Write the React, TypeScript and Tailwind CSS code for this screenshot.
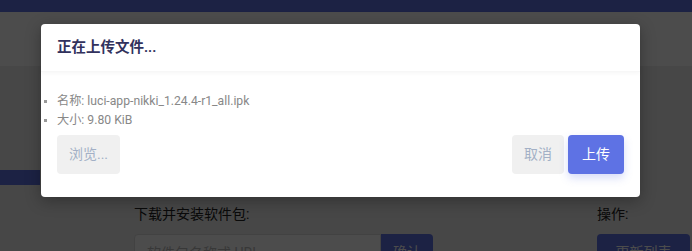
import React from "react";

export default function App() {
  const font = { fontFamily: '"Roboto", "Noto Sans CJK SC", sans-serif' };
  return (
    <div className="relative w-[692px] h-[251px] overflow-hidden bg-[#ededed]" style={font}>
      {/* page behind */}
      <div className="h-[12px] bg-[#5e72e4]" />
      <div className="h-[54px] bg-white" />
      <div className="flex">
        <div className="w-[40px] pt-[104px]">
          <div className="h-[15px] bg-[#5e72e4]" />
        </div>
        <div className="flex-1 pl-[94px] pt-[138px] flex">
          <div className="w-[299px]">
            <div className="text-[14px] text-[#222] leading-[20px]">下载并安装软件包:</div>
            <div className="mt-[10px] flex h-[36px]">
              <div className="flex-1 bg-white border border-[#ddd] rounded-l-[4px] px-[12px] pt-[8px] text-[14px] text-[#bbb]">软件包名称或 URL…</div>
              <div className="w-[52px] bg-[#5e72e4] rounded-r-[4px] text-white text-[14px] text-center pt-[8px]">确认</div>
            </div>
          </div>
          <div className="ml-[164px]">
            <div className="text-[14px] text-[#222] leading-[20px]">操作:</div>
            <div className="mt-[10px] w-[93px] h-[36px] bg-[#5e72e4] rounded-[4px] text-white text-[14px] text-center pt-[8px]">更新列表</div>
          </div>
        </div>
      </div>

      {/* overlay */}
      <div className="absolute inset-0 bg-black/70" />

      {/* modal */}
      <div className="absolute left-[41px] top-[24px] w-[599px] h-[173px] bg-white rounded-[4px] shadow-[0_4px_16px_rgba(0,0,0,0.3)] flex flex-col">
        <div className="h-[48px] flex items-center px-[16px] shadow-[0_2px_4px_rgba(0,0,0,0.03)] border-b border-[#f7f7f7]">
          <h3 className="text-[14.5px] font-semibold text-[#32325d]">正在上传文件...</h3>
        </div>
        <ul className="list-[square] pl-[16px] mt-[20px] text-[12.2px] leading-[19px] text-[#888] marker:text-[#999] marker:text-[10px]">
          <li>名称: luci-app-nikki_1.24.4-r1_all.ipk</li>
          <li>大小: 9.80 KiB</li>
        </ul>
        <div className="mt-[5px] px-[16px] flex items-start">
          <button className="h-[39px] w-[63px] bg-[#f0f0f0] rounded-[4px] text-[14px] text-[#a3b0c6]">浏览...</button>
          <div className="flex-1" />
          <button className="h-[39px] w-[52px] bg-[#f0f0f0] rounded-[4px] text-[14px] text-[#a3b0c6]">取消</button>
          <button className="ml-[4px] h-[39px] w-[56px] bg-[#5e72e4] rounded-[4px] text-[14px] text-white shadow-[0_4px_8px_rgba(94,114,228,0.25)]">上传</button>
        </div>
      </div>
    </div>
  );
}
